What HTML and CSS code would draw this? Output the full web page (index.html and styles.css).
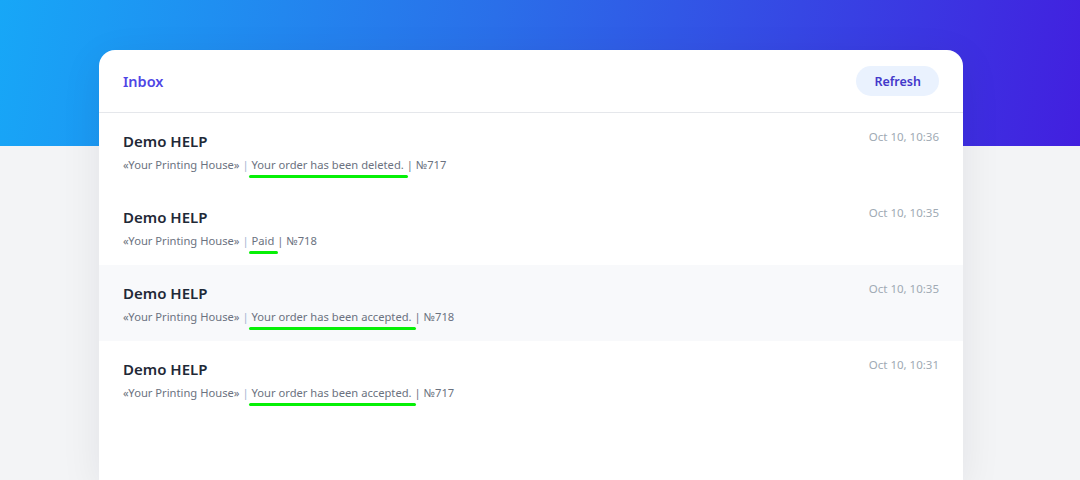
FILE: index.html
```html
<!DOCTYPE html>
<html lang="en">
<head>
  <meta charset="UTF-8" />
  <meta name="viewport" content="width=device-width, initial-scale=1.0"/>
  <title>Inbox</title>
  <link rel="stylesheet" href="styles.css">
</head>
<body>

  <div class="inbox-card">
    <div class="inbox-header">
      <h2 class="inbox-title">Inbox</h2>
      <button class="btn-refresh">Refresh</button>
    </div>

    <div class="messages">
      <div class="message">
        <div class="message-body">
          <p class="message-from">Demo HELP</p>
          <p class="message-text">«Your Printing House» <span class="sep">|</span> <span class="mark">Your order has been deleted.</span> | №717</p>
        </div>
        <span class="message-date">Oct 10, 10:36</span>
      </div>

      <div class="message">
        <div class="message-body">
          <p class="message-from">Demo HELP</p>
          <p class="message-text">«Your Printing House» <span class="sep">|</span> <span class="mark">Paid</span> | №718</p>
        </div>
        <span class="message-date">Oct 10, 10:35</span>
      </div>

      <div class="message message--hover">
        <div class="message-body">
          <p class="message-from">Demo HELP</p>
          <p class="message-text">«Your Printing House» <span class="sep">|</span> <span class="mark">Your order has been accepted.</span> | №718</p>
        </div>
        <span class="message-date">Oct 10, 10:35</span>
      </div>

      <div class="message">
        <div class="message-body">
          <p class="message-from">Demo HELP</p>
          <p class="message-text">«Your Printing House» <span class="sep">|</span> <span class="mark">Your order has been accepted.</span> | №717</p>
        </div>
        <span class="message-date">Oct 10, 10:31</span>
      </div>
    </div>
  </div>

</body>
</html>
```

FILE: styles.css
```css
body {
  font-family: "Noto Sans", "Open Sans", Arial, sans-serif;
  margin: 0;
  padding: 50px 18px 0 0;
  background: linear-gradient(100deg, #17a7f7 0%, #2a6fe9 45%, #421fdf 100%) no-repeat top left / 100% 146px, #f3f4f6;
  height: 100vh;
  box-sizing: border-box;
  overflow: hidden;
}

.inbox-card {
  width: 864px;
  margin: 0 auto;
  min-height: 430px;
  background: #ffffff;
  border-radius: 16px 16px 0 0;
  box-shadow: 0 10px 40px rgba(15, 23, 42, 0.08);
}

.inbox-header {
  display: flex;
  justify-content: space-between;
  align-items: center;
  height: 62px;
  padding: 0 24px;
  border-bottom: 1px solid #e5e7eb;
}

.inbox-title {
  margin: 0;
  font-size: 14.5px;
  font-weight: 600;
  color: #4f46e5;
}

.btn-refresh {
  font-family: inherit;
  font-size: 12.5px;
  font-weight: 600;
  color: #4338ca;
  background: #eaf2fe;
  border: none;
  border-radius: 15px;
  height: 30px;
  padding: 0 18px;
  cursor: pointer;
}

.message {
  display: flex;
  justify-content: space-between;
  align-items: flex-start;
  padding: 16px 24px 15px;
}

.message--hover {
  background: #f8f9fb;
}

.message-from {
  margin: 0;
  font-size: 15px;
  font-weight: 600;
  line-height: 24px;
  color: #1f2937;
}

.message-text {
  margin: 3px 0 0;
  font-size: 11.2px;
  line-height: 18px;
  color: #6b7280;
}

.sep {
  color: #9fb3d1;
}

.mark {
  position: relative;
}

.mark::after {
  content: "";
  position: absolute;
  left: -3px;
  right: -4px;
  bottom: -6px;
  height: 3px;
  border-radius: 2px;
  background: #06f006;
}

.message-date {
  font-size: 11.5px;
  line-height: 16px;
  color: #a0aab4;
}
```
